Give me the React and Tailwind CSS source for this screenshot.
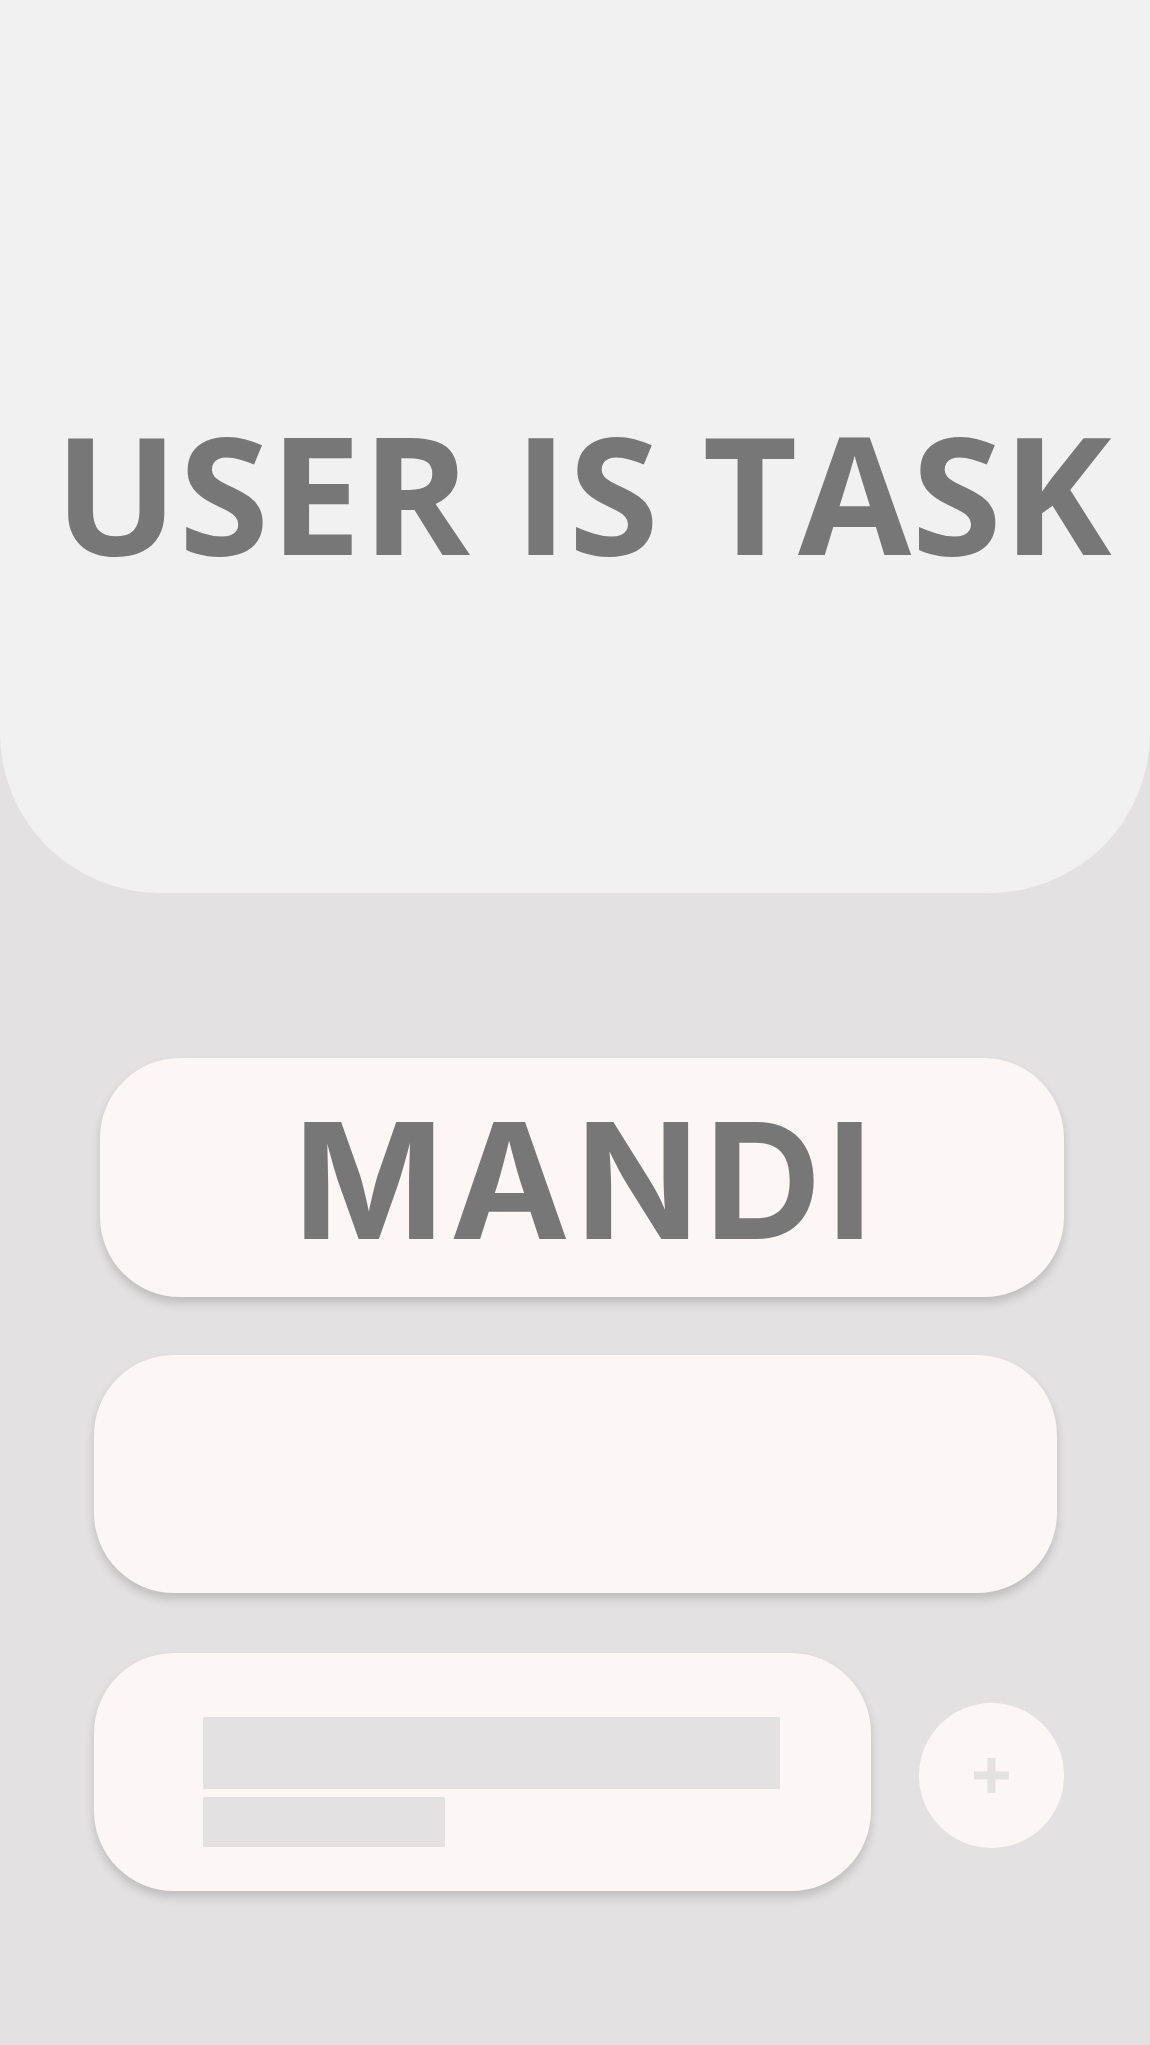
export default function App() {
  return (
    <div className="w-[1150px] h-[2045px] bg-[#e3e1e2] overflow-hidden flex flex-col">
      <div className="h-[893px] bg-[#f1f1f1] rounded-b-[160px] pt-[410px]">
        <div
          className="text-center whitespace-nowrap leading-none font-bold text-[164px] text-[#777777] tracking-[0.5px] pl-[16px]"
          style={{ fontFamily: '"Open Sans", sans-serif' }}
        >
          USER IS TASK
        </div>
      </div>

      <div className="mt-[165px] ml-[100px] w-[964px] h-[239px] bg-[#fdf6f6] rounded-[80px] shadow-[0_6px_10px_rgba(0,0,0,0.16)] pt-[42px]">
        <div
          className="text-center whitespace-nowrap leading-none font-bold text-[161px] text-[#777777] tracking-[6px] pl-[8px]"
          style={{ fontFamily: 'Inter, sans-serif' }}
        >
          MANDI
        </div>
      </div>

      <div className="mt-[58px] ml-[94px] w-[963px] h-[238px] bg-[#fdf6f6] rounded-[80px] shadow-[0_6px_10px_rgba(0,0,0,0.16)]" />

      <div className="mt-[60px] ml-[94px] flex items-center gap-[48px]">
        <div className="w-[777px] h-[238px] bg-[#fdf6f6] rounded-[80px] shadow-[0_6px_10px_rgba(0,0,0,0.16)] pt-[64px] pl-[109px] flex flex-col gap-[8px]">
          <div className="w-[577px] h-[72px] bg-[#e3e1e2]" />
          <div className="w-[242px] h-[50px] bg-[#e3e1e2]" />
        </div>
        <div className="w-[145px] h-[145px] rounded-full bg-[#fdf6f6] flex items-center justify-center mt-[6px]">
          <svg width="35" height="35" viewBox="0 0 35 35">
            <rect x="0" y="13.5" width="35" height="8" fill="#e3e1e2" />
            <rect x="13.5" y="0" width="8" height="35" fill="#e3e1e2" />
          </svg>
        </div>
      </div>
    </div>
  );
}
